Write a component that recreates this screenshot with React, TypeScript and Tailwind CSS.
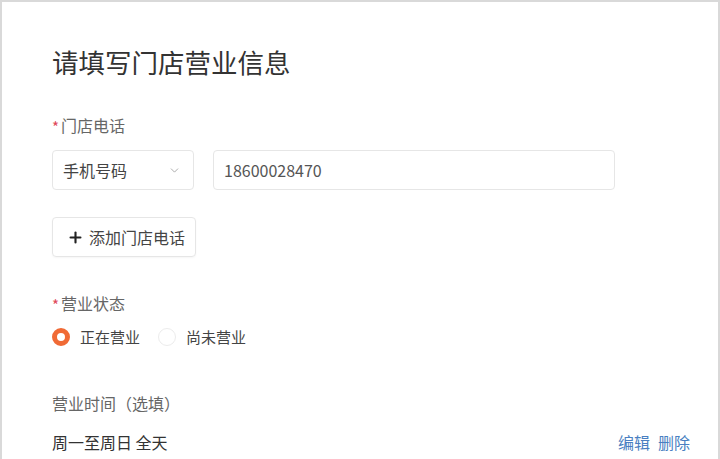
import { ChevronDown, Plus } from "lucide-react";

const FONT = {
  fontFamily: '"Noto Sans CJK SC", "Noto Sans", sans-serif',
};

function Label({ text, required }: { text: string; required?: boolean }) {
  return (
    <p className="flex items-center text-[16px] leading-5 text-[#666]">
      {required && (
        <span className="mr-[2px] mt-[3px] text-[15px] leading-none text-[#e0475a]">*</span>
      )}
      {text}
    </p>
  );
}

export default function App() {
  return (
    <div
      className="h-[459px] w-[720px] overflow-hidden border-t-2 border-l-2 border-r-2 border-[#d9d9d9] bg-white"
      style={FONT}
    >
      <div className="pl-[50px] pr-[28px] pt-[40px]">
        <h1 className="text-[26.5px] leading-10 font-normal text-[#333]">
          请填写门店营业信息
        </h1>

        {/* 门店电话 */}
        <div className="mt-[33px]">
          <Label text="门店电话" required />
          <div className="mt-[15px] flex gap-[19px]">
            <div className="flex h-10 w-[142px] items-center justify-between rounded-[4px] border border-[#e6e6e6] pl-[10px] pr-[12px] text-[16px] text-[#444]">
              <span>手机号码</span>
              <ChevronDown size={13} strokeWidth={1.5} className="text-[#999]" />
            </div>
            <div className="flex h-10 w-[402px] items-center rounded-[4px] border border-[#e6e6e6] px-[10px] text-[16px] text-[#555]">
              18600028470
            </div>
          </div>
          <button className="mt-[27px] flex h-10 w-[144px] items-center gap-[5px] rounded-[4px] border border-[#e6e6e6] pl-[14px] text-[16px] text-[#444] shadow-[0_1px_2px_rgba(0,0,0,0.04)]">
            <Plus size={17} strokeWidth={3} className="text-[#222]" />
            添加门店电话
          </button>
        </div>

        {/* 营业状态 */}
        <div className="mt-[36px]">
          <Label text="营业状态" required />
          <div className="mt-[13px] flex items-center text-[15px] text-[#444]">
            <span className="h-[18px] w-[18px] rounded-full border-[5px] border-[#f06a35] bg-white" />
            <span className="ml-[10px]">正在营业</span>
            <span className="ml-[18px] h-[18px] w-[18px] rounded-full border border-[#ececec]" />
            <span className="ml-[10px]">尚未营业</span>
          </div>
        </div>

        {/* 营业时间 */}
        <div className="mt-[44px]">
          <Label text="营业时间（选填）" />
          <div className="mt-[17px] flex items-center justify-between text-[16px]">
            <span className="text-[#333]">周一至周日 全天</span>
            <span className="flex gap-[8px] text-[#4a7fc1]">
              <span>编辑</span>
              <span>删除</span>
            </span>
          </div>
        </div>
      </div>
    </div>
  );
}
